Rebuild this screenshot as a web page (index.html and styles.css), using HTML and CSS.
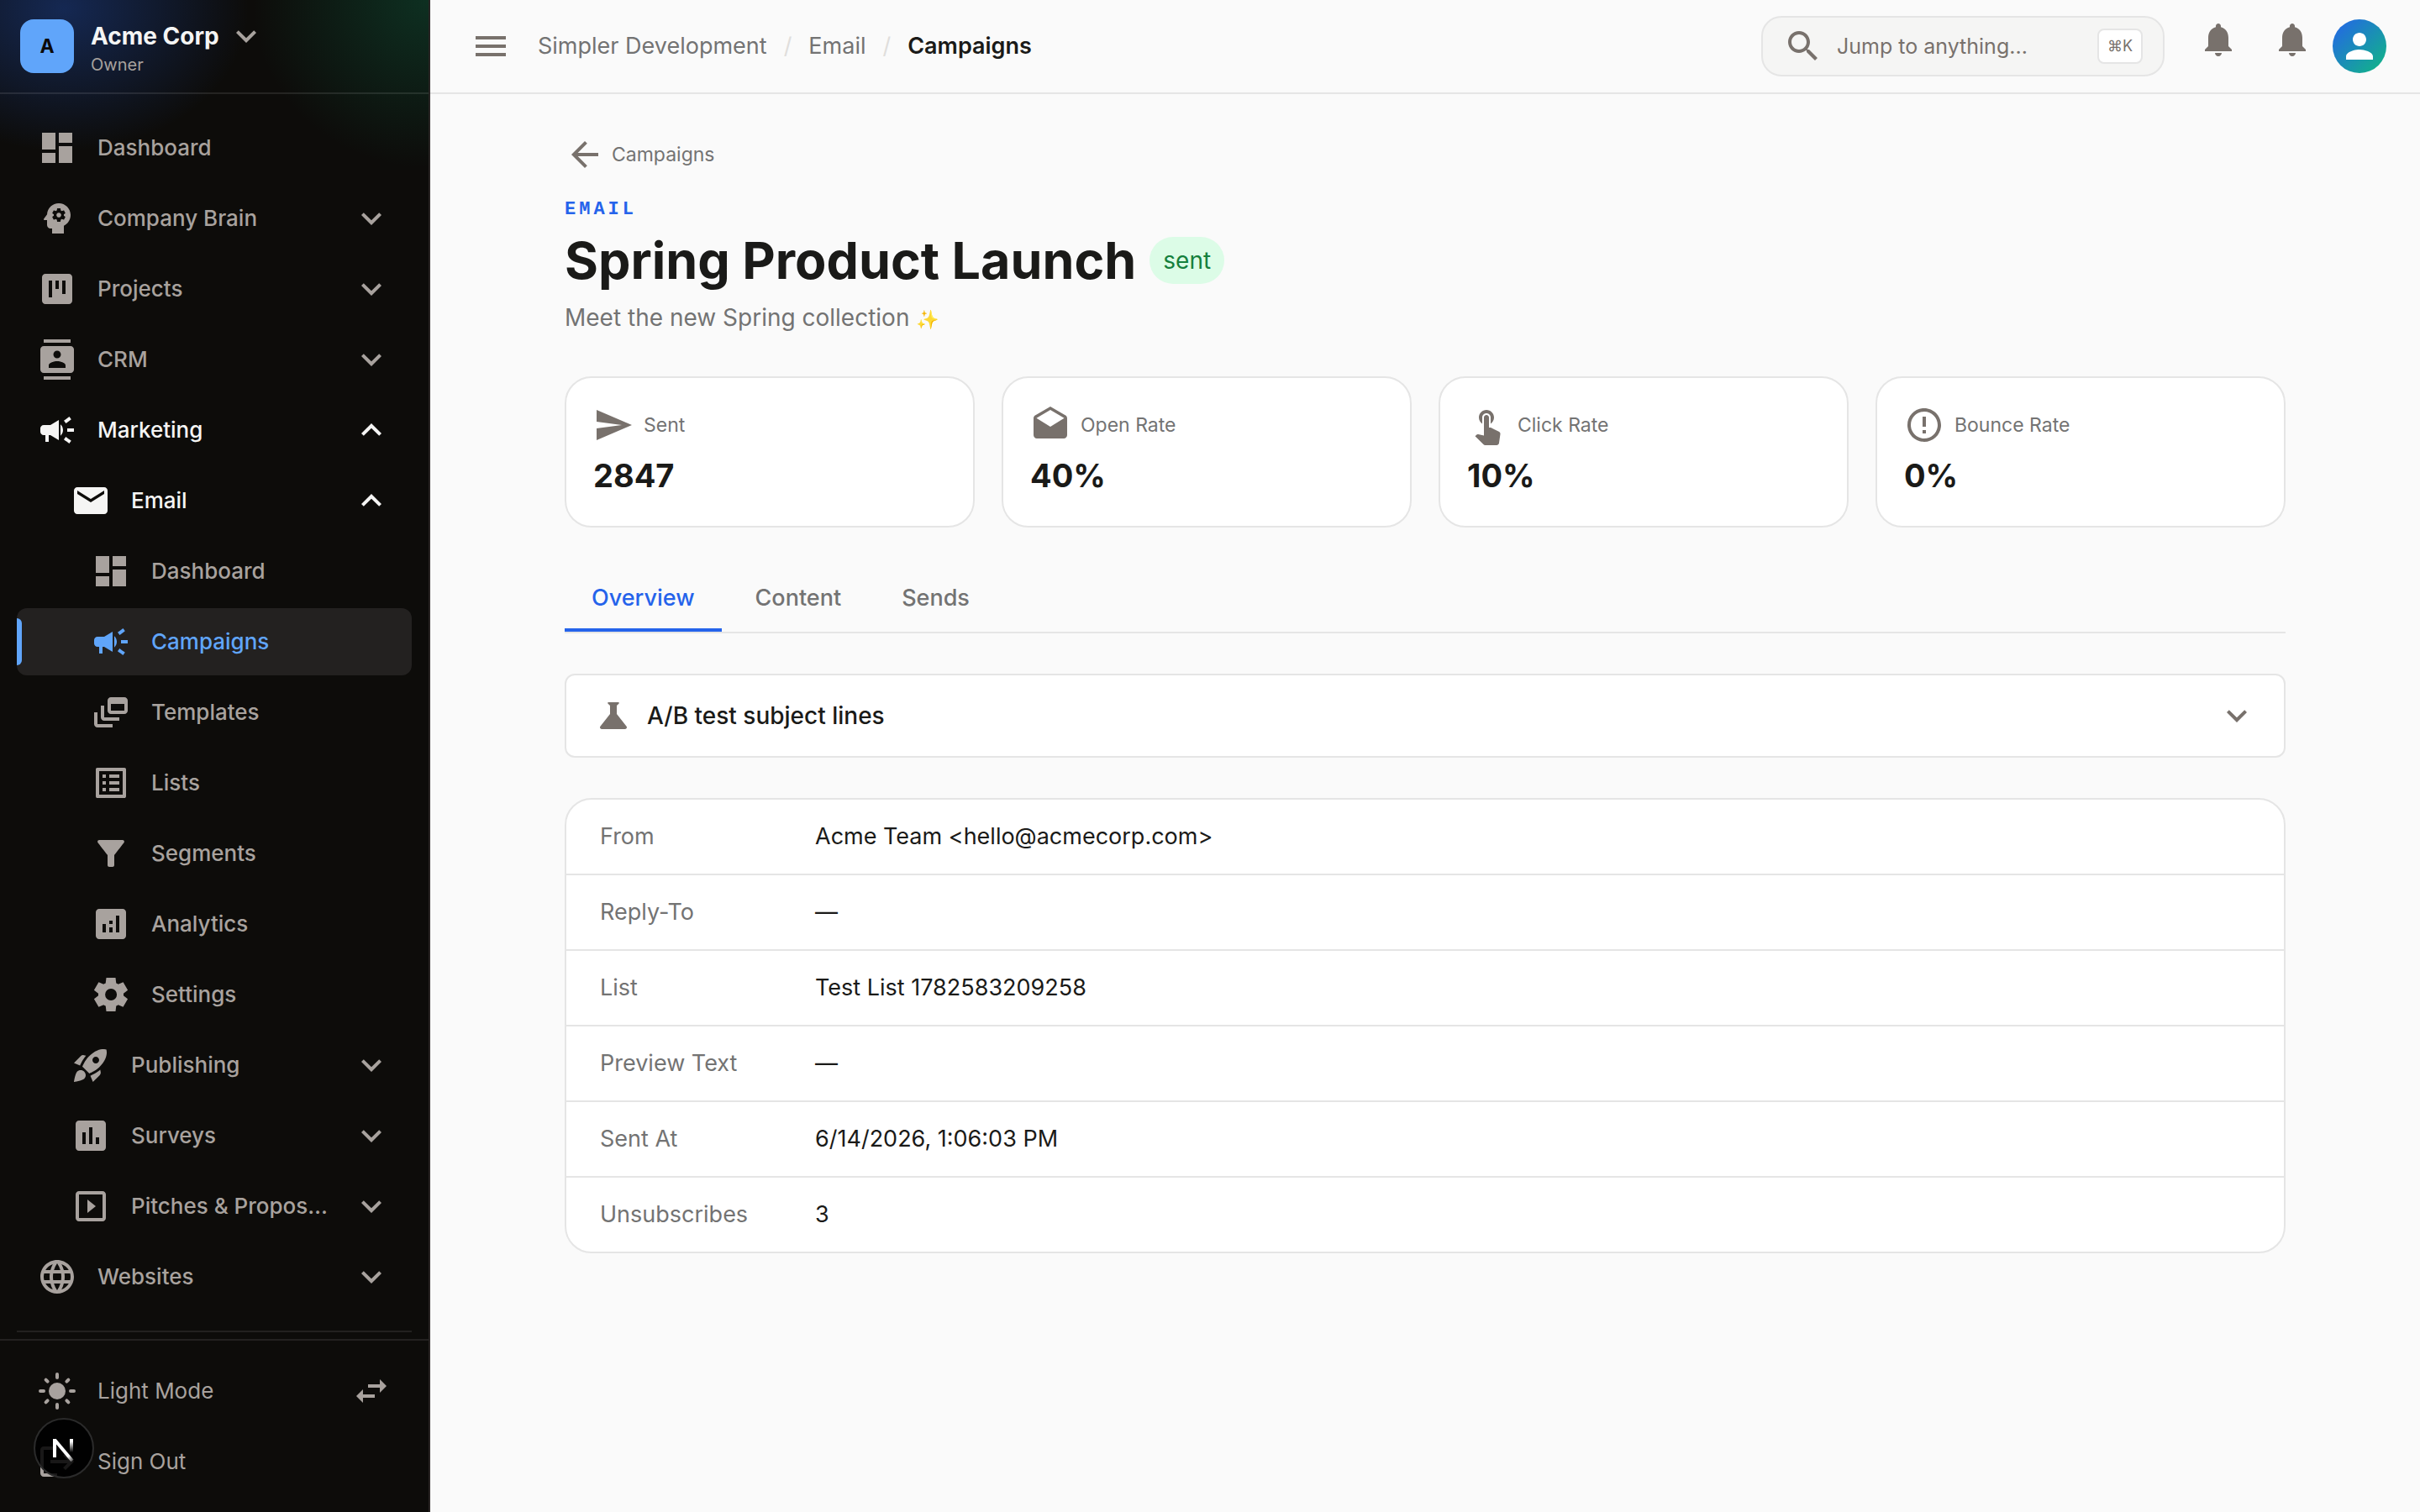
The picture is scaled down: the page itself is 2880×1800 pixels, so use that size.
FILE: index.html
```
<!DOCTYPE html>
<html lang="en">
<head>
  <meta charset="UTF-8">
  <meta name="viewport" content="width=device-width, initial-scale=1.0">
  <title>Spring Product Launch - Campaigns</title>
  <link rel="stylesheet" href="styles.css">
</head>
<body>
  <!-- icon set -->
  <svg class="sprite" aria-hidden="true">
    <symbol id="i-dashboard" viewBox="0 0 24 24"><path d="M3 13h8V3H3v10zm0 8h8v-6H3v6zm10 0h8V11h-8v10zm0-18v6h8V3h-8z"/></symbol>
    <symbol id="i-brain" viewBox="0 0 24 24"><path d="M13 8.57c-.79 0-1.43.64-1.43 1.43s.64 1.43 1.43 1.43 1.43-.64 1.43-1.43-.64-1.43-1.43-1.43z"/><path d="M13 3C9.25 3 6.2 5.94 6.02 9.64L4.1 12.2c-.25.33-.01.8.4.8H6v3c0 1.1.9 2 2 2h1v3h7v-4.68c2.36-1.12 4-3.53 4-6.32 0-3.87-3.13-7-7-7zm3 7c0 .13-.01.26-.02.39l.83.66c.08.06.1.16.05.25l-.8 1.39c-.05.09-.16.12-.24.09l-.99-.4c-.21.16-.43.29-.67.39L14 13.83c-.01.1-.1.17-.2.17h-1.6c-.1 0-.18-.07-.2-.17l-.15-1.06c-.25-.1-.47-.23-.68-.39l-.99.4c-.09.03-.2 0-.25-.09l-.8-1.39c-.05-.08-.03-.19.05-.25l.84-.66c-.01-.13-.02-.26-.02-.39s.02-.27.04-.39l-.85-.66c-.08-.06-.1-.16-.05-.26l.8-1.38c.05-.09.15-.12.24-.09l1 .4c.2-.15.43-.29.67-.39L12 6.17c.02-.1.1-.17.2-.17h1.6c.1 0 .18.07.2.17l.15 1.06c.24.1.46.23.67.39l1-.4c.09-.03.2 0 .24.09l.8 1.38c.05.09.03.2-.05.26l-.85.66c.03.12.04.25.04.39z"/></symbol>
    <symbol id="i-projects" viewBox="0 0 24 24"><path d="M19 3H5c-1.1 0-2 .9-2 2v14c0 1.1.9 2 2 2h14c1.1 0 2-.9 2-2V5c0-1.1-.9-2-2-2zM9 17H7V7h2v10zm4-5h-2V7h2v5zm4 3h-2V7h2v8z"/></symbol>
    <symbol id="i-contacts" viewBox="0 0 24 24"><path d="M20 0H4v2h16V0zM4 24h16v-2H4v2zM20 4H4c-1.1 0-2 .9-2 2v12c0 1.1.9 2 2 2h16c1.1 0 2-.9 2-2V6c0-1.1-.9-2-2-2zm-8 2.75c1.24 0 2.25 1.01 2.25 2.25s-1.01 2.25-2.25 2.25S9.75 10.24 9.75 9 10.76 6.75 12 6.75zM17 17H7v-1.5c0-1.67 3.33-2.5 5-2.5s5 .83 5 2.5V17z"/></symbol>
    <symbol id="i-campaign" viewBox="0 0 24 24"><path d="M18 11v2h4v-2h-4zm-2 6.61c.96.71 2.21 1.65 3.2 2.39.4-.53.8-1.07 1.2-1.6-.99-.74-2.24-1.68-3.2-2.4-.4.54-.8 1.08-1.2 1.61zM20.4 5.6c-.4-.53-.8-1.07-1.2-1.6-.99.74-2.24 1.68-3.2 2.4.4.53.8 1.07 1.2 1.6.96-.72 2.21-1.65 3.2-2.4zM4 9c-1.1 0-2 .9-2 2v2c0 1.1.9 2 2 2h1v4h2v-4h1l5 3V6L8 9H4zm11.5 3c0-1.33-.58-2.53-1.5-3.35v6.69c.92-.81 1.5-2.01 1.5-3.34z"/></symbol>
    <symbol id="i-mail" viewBox="0 0 24 24"><path d="M20 4H4c-1.1 0-1.99.9-1.99 2L2 18c0 1.1.9 2 2 2h16c1.1 0 2-.9 2-2V6c0-1.1-.9-2-2-2zm0 4l-8 5-8-5V6l8 5 8-5v2z"/></symbol>
    <symbol id="i-templates" viewBox="0 0 24 24"><path d="M8 8H6v7c0 1.1.9 2 2 2h9v-2H8V8zM20 3h-8c-1.1 0-2 .9-2 2v6c0 1.1.9 2 2 2h8c1.1 0 2-.9 2-2V5c0-1.1-.9-2-2-2zm0 8h-8V7h8v4zM4 12H2v7c0 1.1.9 2 2 2h9v-2H4v-7z"/></symbol>
    <symbol id="i-list" viewBox="0 0 24 24"><path d="M19 5v14H5V5h14m1.1-2H3.9c-.5 0-.9.4-.9.9v16.2c0 .4.4.9.9.9h16.2c.4 0 .9-.5.9-.9V3.9c0-.5-.5-.9-.9-.9zM11 7h6v2h-6V7zm0 4h6v2h-6v-2zm0 4h6v2h-6zM7 7h2v2H7zm0 4h2v2H7zm0 4h2v2H7z"/></symbol>
    <symbol id="i-filter" viewBox="0 0 24 24"><path d="M4.25 5.61C6.27 8.2 10 13 10 13v6c0 .55.45 1 1 1h2c.55 0 1-.45 1-1v-6s3.72-4.8 5.74-7.39c.51-.66.04-1.61-.79-1.61H5.04c-.83 0-1.3.95-.79 1.61z"/></symbol>
    <symbol id="i-analytics" viewBox="0 0 24 24"><path d="M19 3H5c-1.1 0-2 .9-2 2v14c0 1.1.9 2 2 2h14c1.1 0 2-.9 2-2V5c0-1.1-.9-2-2-2zM9 17H7v-5h2v5zm4 0h-2v-3h2v3zm0-5h-2v-2h2v2zm4 5h-2V7h2v10z"/></symbol>
    <symbol id="i-settings" viewBox="0 0 24 24"><path d="m9.25 22-.4-3.2q-.325-.125-.612-.3-.288-.175-.563-.375L4.7 19.375l-2.75-4.75 2.575-1.95Q4.5 12.5 4.5 12.337v-.675q0-.162.025-.337L1.95 9.375l2.75-4.75 2.975 1.25q.275-.2.575-.375.3-.175.6-.3l.4-3.2h5.5l.4 3.2q.325.125.613.3.287.175.562.375l2.975-1.25 2.75 4.75-2.575 1.95q.025.175.025.338v.674q0 .163-.05.338l2.575 1.95-2.75 4.75-2.95-1.25q-.275.2-.575.375-.3.175-.6.3l-.4 3.2Zm2.8-6.5q1.45 0 2.475-1.025Q15.55 13.45 15.55 12q0-1.45-1.025-2.475Q13.5 8.5 12.05 8.5q-1.475 0-2.488 1.025Q8.55 10.55 8.55 12q0 1.45 1.012 2.475Q10.575 15.5 12.05 15.5Z"/></symbol>
    <symbol id="i-rocket" viewBox="0 0 24 24"><path d="M9.19 6.35c-2.04 2.29-3.44 5.58-3.57 5.89L2 10.69l4.05-4.05c.47-.47 1.15-.68 1.81-.55l1.33.26zM11.17 17s3.74-1.55 5.89-3.7c5.4-5.4 4.5-9.62 4.21-10.57-.95-.3-5.17-1.19-10.57 4.21C8.55 9.09 7 12.83 7 12.83L11.17 17zm6.48-2.19c-2.29 2.04-5.58 3.44-5.89 3.57L13.31 22l4.05-4.05c.47-.47.68-1.15.55-1.81l-.26-1.33zM9 18c0 .83-.34 1.58-.88 2.12C6.94 21.3 2 22 2 22s.7-4.94 1.88-6.12C4.42 15.34 5.17 15 6 15c1.66 0 3 1.34 3 3zm4-9c0-1.1.9-2 2-2s2 .9 2 2-.9 2-2 2-2-.9-2-2z"/></symbol>
    <symbol id="i-poll" viewBox="0 0 24 24"><path d="M19 3H5c-1.1 0-2 .9-2 2v14c0 1.1.9 2 2 2h14c1.1 0 2-.9 2-2V5c0-1.1-.9-2-2-2zM9 17H7v-7h2v7zm4 0h-2V7h2v10zm4 0h-2v-4h2v4z"/></symbol>
    <symbol id="i-slideshow" viewBox="0 0 24 24"><path d="M10 8v8l5-4-5-4zm9-5H5c-1.1 0-2 .9-2 2v14c0 1.1.9 2 2 2h14c1.1 0 2-.9 2-2V5c0-1.1-.9-2-2-2zm0 16H5V5h14v14z"/></symbol>
    <symbol id="i-globe" viewBox="0 0 24 24"><path d="M11.99 2C6.47 2 2 6.48 2 12s4.47 10 9.99 10C17.52 22 22 17.52 22 12S17.52 2 11.99 2zm6.93 6h-2.95c-.32-1.25-.78-2.45-1.38-3.56 1.84.63 3.37 1.91 4.33 3.56zM12 4.04c.83 1.2 1.48 2.53 1.91 3.96h-3.82c.43-1.43 1.08-2.76 1.91-3.96zM4.26 14C4.1 13.36 4 12.69 4 12s.1-1.36.26-2h3.38c-.08.66-.14 1.32-.14 2 0 .68.06 1.34.14 2H4.26zm.82 2h2.95c.32 1.25.78 2.45 1.38 3.56-1.84-.63-3.37-1.9-4.33-3.56zm2.95-8H5.08c.96-1.66 2.49-2.93 4.33-3.56C8.81 5.55 8.35 6.75 8.03 8zM12 19.96c-.83-1.2-1.48-2.53-1.91-3.96h3.82c-.43 1.43-1.08 2.76-1.91 3.96zM14.34 14H9.66c-.09-.66-.16-1.32-.16-2 0-.68.07-1.35.16-2h4.68c.09.65.16 1.32.16 2 0 .68-.07 1.34-.16 2zm.25 5.56c.6-1.11 1.06-2.31 1.38-3.56h2.95c-.96 1.65-2.49 2.93-4.33 3.56zM16.36 14c.08-.66.14-1.32.14-2 0-.68-.06-1.34-.14-2h3.38c.16.64.26 1.31.26 2s-.1 1.36-.26 2h-3.38z"/></symbol>
    <symbol id="i-sun" viewBox="0 0 24 24"><circle cx="12" cy="12" r="5"/><path fill="none" stroke="currentColor" stroke-width="2" stroke-linecap="round" d="M12 2v2M12 20v2M2 12h2M20 12h2M5.3 5.3l1 1M17.7 17.7l1 1M18.7 5.3l-1 1M6.3 17.7l-1 1"/></symbol>
    <symbol id="i-swap" viewBox="0 0 24 24"><path d="M6.99 11L3 15l3.99 4v-3H14v-2H6.99v-3zM21 9l-3.99-4v3H10v2h7.01v3L21 9z"/></symbol>
    <symbol id="i-logout" viewBox="0 0 24 24"><path d="M17 7l-1.41 1.41L18.17 11H8v2h10.17l-2.58 2.58L17 17l5-5zM4 5h8V3H4c-1.1 0-2 .9-2 2v14c0 1.1.9 2 2 2h8v-2H4V5z"/></symbol>
    <symbol id="i-down" viewBox="0 0 24 24"><path d="M16.59 8.59L12 13.17 7.41 8.59 6 10l6 6 6-6z"/></symbol>
    <symbol id="i-up" viewBox="0 0 24 24"><path d="M12 8l-6 6 1.41 1.41L12 10.83l4.59 4.58L18 14z"/></symbol>
    <symbol id="i-menu" viewBox="0 0 24 24"><path d="M3 18h18v-2H3v2zm0-5h18v-2H3v2zm0-7v2h18V6H3z"/></symbol>
    <symbol id="i-search" viewBox="0 0 24 24"><path d="M15.5 14h-.79l-.28-.27C15.41 12.59 16 11.11 16 9.5 16 5.91 13.09 3 9.5 3S3 5.91 3 9.5 5.91 16 9.5 16c1.61 0 3.09-.59 4.23-1.57l.27.28v.79l5 4.99L20.49 19l-4.99-5zm-6 0C7.01 14 5 11.99 5 9.5S7.01 5 9.5 5 14 7.01 14 9.5 11.99 14 9.5 14z"/></symbol>
    <symbol id="i-bell" viewBox="0 0 24 24"><path d="M12 22c1.1 0 2-.9 2-2h-4c0 1.1.89 2 2 2zm6-6v-5c0-3.07-1.64-5.64-4.5-6.32V4c0-.83-.67-1.5-1.5-1.5s-1.5.67-1.5 1.5v.68C7.63 5.36 6 7.92 6 11v5l-2 2v1h16v-1l-2-2z"/></symbol>
    <symbol id="i-person" viewBox="0 0 24 24"><path d="M12 12c2.21 0 4-1.79 4-4s-1.79-4-4-4-4 1.79-4 4 1.79 4 4 4zm0 2c-2.67 0-8 1.34-8 4v2h16v-2c0-2.66-5.33-4-8-4z"/></symbol>
    <symbol id="i-back" viewBox="0 0 24 24"><path d="M20 11H7.83l5.59-5.59L12 4l-8 8 8 8 1.41-1.41L7.83 13H20v-2z"/></symbol>
    <symbol id="i-send" viewBox="0 0 24 24"><path d="M2.01 21L23 12 2.01 3 2 10l15 2-15 2z"/></symbol>
    <symbol id="i-drafts" viewBox="0 0 24 24"><path d="M21.99 8c0-.72-.37-1.35-.94-1.7L12 1 2.95 6.3C2.38 6.65 2 7.28 2 8v10c0 1.1.9 2 2 2h16c1.1 0 2-.9 2-2l-.01-10zM12 13L3.74 7.84 12 3l8.26 4.84L12 13z"/></symbol>
    <symbol id="i-touch" viewBox="0 0 24 24"><path d="M9 11.24V7.5C9 6.12 10.12 5 11.5 5S14 6.12 14 7.5v3.74c1.21-.81 2-2.18 2-3.74C16 5.01 13.99 3 11.5 3S7 5.01 7 7.5c0 1.56.79 2.93 2 3.74zm9.84 4.63l-4.54-2.26c-.17-.07-.35-.11-.54-.11H13v-6c0-.83-.67-1.5-1.5-1.5S10 6.67 10 7.5v10.74l-3.43-.72c-.08-.01-.15-.03-.24-.03-.31 0-.59.13-.79.33l-.79.8 4.94 4.94c.27.27.65.44 1.06.44h6.79c.75 0 1.33-.55 1.44-1.28l.75-5.27c.01-.07.02-.14.02-.2 0-.62-.38-1.16-.91-1.38z"/></symbol>
    <symbol id="i-error" viewBox="0 0 24 24"><path d="M11 15h2v2h-2zm0-8h2v6h-2zm.99-5C6.47 2 2 6.48 2 12s4.47 10 9.99 10C17.52 22 22 17.52 22 12S17.52 2 11.99 2zM12 20c-4.42 0-8-3.58-8-8s3.58-8 8-8 8 3.58 8 8-3.58 8-8 8z"/></symbol>
    <symbol id="i-flask" viewBox="0 0 24 24"><path d="M9 4h6c.4 0 .5.5.3.7L14 6v5l5.8 7.4c.5.6.1 1.6-.8 1.6H5c-.9 0-1.3-1-.8-1.6L10 11V6L8.7 4.7C8.5 4.5 8.6 4 9 4z"/></symbol>
  </svg>

  <div class="app">
    <aside class="sidebar">
      <div class="workspace">
        <span class="workspace-logo">A</span>
        <div class="workspace-info">
          <button type="button" class="workspace-name">Acme Corp <svg class="icon"><use href="#i-down"/></svg></button>
          <span class="workspace-role">Owner</span>
        </div>
      </div>

      <nav class="nav">
        <a href="#" class="nav-item"><svg class="icon"><use href="#i-dashboard"/></svg><span class="nav-label">Dashboard</span></a>
        <button type="button" class="nav-item"><svg class="icon"><use href="#i-brain"/></svg><span class="nav-label">Company Brain</span><svg class="icon"><use href="#i-down"/></svg></button>
        <button type="button" class="nav-item"><svg class="icon"><use href="#i-projects"/></svg><span class="nav-label">Projects</span><svg class="icon"><use href="#i-down"/></svg></button>
        <button type="button" class="nav-item"><svg class="icon"><use href="#i-contacts"/></svg><span class="nav-label">CRM</span><svg class="icon"><use href="#i-down"/></svg></button>
        <button type="button" class="nav-item open"><svg class="icon"><use href="#i-campaign"/></svg><span class="nav-label">Marketing</span><svg class="icon"><use href="#i-up"/></svg></button>
        <button type="button" class="nav-item level-2 open"><svg class="icon"><use href="#i-mail"/></svg><span class="nav-label">Email</span><svg class="icon"><use href="#i-up"/></svg></button>
        <a href="#" class="nav-item level-3"><svg class="icon"><use href="#i-dashboard"/></svg><span class="nav-label">Dashboard</span></a>
        <a href="#" class="nav-item level-3 active"><svg class="icon"><use href="#i-campaign"/></svg><span class="nav-label">Campaigns</span></a>
        <a href="#" class="nav-item level-3"><svg class="icon"><use href="#i-templates"/></svg><span class="nav-label">Templates</span></a>
        <a href="#" class="nav-item level-3"><svg class="icon"><use href="#i-list"/></svg><span class="nav-label">Lists</span></a>
        <a href="#" class="nav-item level-3"><svg class="icon"><use href="#i-filter"/></svg><span class="nav-label">Segments</span></a>
        <a href="#" class="nav-item level-3"><svg class="icon"><use href="#i-analytics"/></svg><span class="nav-label">Analytics</span></a>
        <a href="#" class="nav-item level-3"><svg class="icon"><use href="#i-settings"/></svg><span class="nav-label">Settings</span></a>
        <button type="button" class="nav-item level-2"><svg class="icon"><use href="#i-rocket"/></svg><span class="nav-label">Publishing</span><svg class="icon"><use href="#i-down"/></svg></button>
        <button type="button" class="nav-item level-2"><svg class="icon"><use href="#i-poll"/></svg><span class="nav-label">Surveys</span><svg class="icon"><use href="#i-down"/></svg></button>
        <button type="button" class="nav-item level-2"><svg class="icon"><use href="#i-slideshow"/></svg><span class="nav-label">Pitches &amp; Propos…</span><svg class="icon"><use href="#i-down"/></svg></button>
        <button type="button" class="nav-item"><svg class="icon"><use href="#i-globe"/></svg><span class="nav-label">Websites</span><svg class="icon"><use href="#i-down"/></svg></button>
        <hr class="nav-divider">
      </nav>

      <div class="sidebar-footer">
        <button type="button" class="nav-item plain"><svg class="icon"><use href="#i-sun"/></svg><span class="nav-label">Light Mode</span><svg class="icon"><use href="#i-swap"/></svg></button>
        <button type="button" class="nav-item plain"><svg class="icon"><use href="#i-logout"/></svg><span class="nav-label">Sign Out</span></button>
      </div>
    </aside>

    <div class="page">
      <header class="topbar">
        <button type="button" class="icon-btn" aria-label="Toggle menu"><svg class="icon"><use href="#i-menu"/></svg></button>
        <nav class="breadcrumb">
          <a href="#">Simpler Development</a>
          <span class="sep">/</span>
          <a href="#">Email</a>
          <span class="sep">/</span>
          <span class="current">Campaigns</span>
        </nav>
        <label class="search">
          <svg class="icon"><use href="#i-search"/></svg>
          <input type="text" placeholder="Jump to anything..." aria-label="Jump to anything">
          <kbd>⌘K</kbd>
        </label>
        <button type="button" class="icon-btn bell" aria-label="Notifications"><svg class="icon"><use href="#i-bell"/></svg></button>
        <button type="button" class="icon-btn bell" aria-label="Alerts"><svg class="icon"><use href="#i-bell"/></svg></button>
        <button type="button" class="avatar" aria-label="Account"><svg class="icon"><use href="#i-person"/></svg></button>
      </header>

      <main class="content">
        <a href="#" class="back"><svg class="icon"><use href="#i-back"/></svg>Campaigns</a>
        <p class="eyebrow">Email</p>
        <h1 class="title">Spring Product Launch <span class="badge">sent</span></h1>
        <p class="subtitle">Meet the new Spring collection <span class="emoji">✨</span></p>

        <section class="stats">
          <div class="stat">
            <div class="stat-label"><svg class="icon"><use href="#i-send"/></svg>Sent</div>
            <div class="stat-value">2847</div>
          </div>
          <div class="stat">
            <div class="stat-label"><svg class="icon"><use href="#i-drafts"/></svg>Open Rate</div>
            <div class="stat-value">40%</div>
          </div>
          <div class="stat">
            <div class="stat-label"><svg class="icon"><use href="#i-touch"/></svg>Click Rate</div>
            <div class="stat-value">10%</div>
          </div>
          <div class="stat">
            <div class="stat-label"><svg class="icon"><use href="#i-error"/></svg>Bounce Rate</div>
            <div class="stat-value">0%</div>
          </div>
        </section>

        <div class="tabs" role="tablist">
          <button type="button" role="tab" class="tab selected" aria-selected="true">Overview</button>
          <button type="button" role="tab" class="tab">Content</button>
          <button type="button" role="tab" class="tab">Sends</button>
        </div>

        <button type="button" class="accordion">
          <svg class="icon"><use href="#i-flask"/></svg>
          <span class="accordion-title">A/B test subject lines</span>
          <svg class="icon"><use href="#i-down"/></svg>
        </button>

        <div class="details">
          <table>
            <tr><th scope="row">From</th><td>Acme Team &lt;hello@acmecorp.com&gt;</td></tr>
            <tr><th scope="row">Reply-To</th><td>—</td></tr>
            <tr><th scope="row">List</th><td>Test List 1782583209258</td></tr>
            <tr><th scope="row">Preview Text</th><td>—</td></tr>
            <tr><th scope="row">Sent At</th><td>6/14/2026, 1:06:03 PM</td></tr>
            <tr><th scope="row">Unsubscribes</th><td>3</td></tr>
          </table>
        </div>
      </main>
    </div>
  </div>

  <!-- dev tools badge -->
  <button type="button" class="dev-badge" aria-label="Open dev tools">
    <svg class="icon" viewBox="0 0 40 40">
      <defs>
        <linearGradient id="fade-diag" gradientUnits="userSpaceOnUse" x1="20" y1="20" x2="33" y2="37"><stop offset="0.5" stop-color="#fff"/><stop offset="1" stop-color="#fff" stop-opacity="0"/></linearGradient>
        <linearGradient id="fade-bar" gradientUnits="userSpaceOnUse" x1="28" y1="12" x2="28" y2="25"><stop offset="0" stop-color="#fff"/><stop offset="1" stop-color="#fff" stop-opacity="0"/></linearGradient>
      </defs>
      <rect x="7" y="9" width="4" height="22" fill="#fff"/>
      <line x1="9" y1="10" x2="30" y2="35" stroke="url(#fade-diag)" stroke-width="4"/>
      <rect x="27" y="9" width="4" height="16" fill="url(#fade-bar)"/>
    </svg>
  </button>
</body>
</html>
```
FILE: styles.css
```
* { box-sizing: border-box; }
body { margin: 0; font-family: Inter, "Liberation Sans", sans-serif; font-size: 27px; line-height: 40px; color: #1a1a18; background: #fafafa; }
a { color: inherit; text-decoration: none; }
button { font: inherit; color: inherit; background: none; border: none; padding: 0; text-align: left; cursor: pointer; }
h1, p { margin: 0; }

.sprite { display: none; }
.icon { width: 48px; height: 48px; flex: none; fill: currentColor; }

.app { display: flex; height: 100vh; }

/* Sidebar */
.sidebar {
  width: 512px;
  flex: none;
  display: flex;
  flex-direction: column;
  color: #a8a29e;
  border-right: 2px solid #292524;
  background:
    radial-gradient(ellipse 220px 170px at 76px 10px, rgba(37, 99, 235, 0.32), transparent),
    radial-gradient(ellipse 210px 200px at 510px 0, rgba(16, 150, 100, 0.26), transparent),
    #0d0c0a;
}
.workspace { display: flex; align-items: center; gap: 20px; height: 112px; padding: 0 24px; border-bottom: 2px solid rgba(255, 255, 255, 0.1); flex: none; }
.workspace-logo { width: 64px; height: 64px; border-radius: 16px; background: #60a5fa; color: #0c0a09; font-size: 23px; font-weight: 700; line-height: 64px; text-align: center; }
.workspace-info { display: flex; flex-direction: column; padding-top: 4px; }
.workspace-name { display: flex; align-items: center; gap: 8px; height: 40px; font-size: 28px; font-weight: 700; color: #f5f5f4; }
.workspace-name .icon { color: #a8a29e; }
.workspace-role { font-size: 20px; line-height: 28px; }

.nav { flex: 1; min-height: 0; overflow: hidden; display: flex; flex-direction: column; gap: 4px; padding: 24px 20px 0; }
.nav-item { position: relative; display: flex; align-items: center; gap: 24px; width: 100%; height: 80px; flex: none; padding: 0 24px; border-radius: 12px; font-size: 26px; font-weight: 500; }
.nav-item.level-2 { padding-left: 64px; }
.nav-item.level-3 { padding-left: 88px; }
.nav-item.open { color: #f5f5f4; }
.nav-item.plain { font-weight: 400; }
.nav-item.active { color: #60a5fa; background: #232120; }
.nav-item.active::before { content: ""; position: absolute; left: 0; top: 12px; bottom: 12px; width: 6px; border-radius: 0 6px 6px 0; background: #60a5fa; }
.nav-label { flex: 1; min-width: 0; white-space: nowrap; }
.nav-divider { width: 100%; margin: 20px 0 0; border: none; border-top: 2px solid #232120; }

.sidebar-footer { display: flex; flex-direction: column; gap: 4px; padding: 20px; border-top: 2px solid #232120; }

/* Top bar */
.page { flex: 1; min-width: 0; overflow: auto; }
.topbar { display: flex; align-items: center; gap: 8px; height: 112px; padding: 0 40px 0 48px; border-bottom: 2px solid #e5e5e5; color: #78716c; }
.icon-btn { display: flex; }
.breadcrumb { flex: 1; display: flex; gap: 20px; padding-left: 24px; color: #737373; }
.breadcrumb .sep { color: #e0dedc; }
.breadcrumb .current { color: #1a1a18; font-weight: 600; }
.search { display: flex; align-items: center; gap: 16px; width: 480px; height: 72px; margin-right: 16px; padding: 0 24px; border: 2px solid #e5e5e5; border-radius: 24px; background: #f5f5f4; }
.search input { flex: 1; min-width: 0; padding: 0; border: none; outline: none; background: none; font: inherit; font-size: 25px; }
.search input::placeholder { color: #78716c; opacity: 1; }
.search kbd { height: 42px; padding: 0 10px; border: 2px solid #e5e5e5; border-radius: 8px; background: #fff; font-family: inherit; font-size: 18px; line-height: 38px; }
.bell { padding: 0 16px 16px; }
.avatar { display: flex; align-items: center; justify-content: center; width: 64px; height: 64px; border-radius: 50%; color: #fff; background: linear-gradient(135deg, #2563eb, #10b981); }

/* Content */
.content { max-width: 2144px; margin: 0 auto; padding: 48px; }
.back { display: flex; align-items: center; gap: 8px; margin-bottom: 24px; font-size: 23px; color: #737373; }
.back .icon { color: #78716c; }
.eyebrow { margin-bottom: 4px; font-family: "Liberation Mono", monospace; font-size: 22px; font-weight: 700; line-height: 36px; letter-spacing: 4px; text-transform: uppercase; color: #2563eb; }
.title { display: flex; align-items: center; gap: 16px; font-size: 61px; font-weight: 700; line-height: 76px; }
.badge { padding: 8px 16px; border-radius: 28px; background: #dcfce7; color: #15803d; font-size: 28px; font-weight: 400; line-height: 40px; }
.subtitle { margin-top: 8px; font-size: 28px; line-height: 44px; color: #737373; }
.emoji { font-size: 22px; line-height: 22px; }

.stats { display: grid; grid-template-columns: repeat(4, 1fr); gap: 32px; margin-top: 48px; }
.stat { padding: 32px; border: 2px solid #e5e5e5; border-radius: 32px; background: #fff; }
.stat-label { display: flex; align-items: center; gap: 12px; margin-bottom: 8px; font-size: 23px; color: #737373; }
.stat-label .icon { color: #78716c; }
.stat-value { font-size: 38px; font-weight: 700; line-height: 56px; }

.tabs { display: flex; gap: 8px; margin-top: 48px; border-bottom: 2px solid #e5e5e5; }
.tab { padding: 16px 32px; border-bottom: 4px solid transparent; font-weight: 500; color: #737373; }
.tab.selected { color: #2563eb; border-bottom-color: #2563eb; }

.accordion { display: flex; align-items: center; gap: 16px; width: 100%; height: 100px; margin-top: 48px; padding: 0 32px; border: 2px solid #e5e5e5; border-radius: 12px; background: #fff; }
.accordion .icon { color: #78716c; }
.accordion-title { flex: 1; font-size: 28px; font-weight: 500; }

.details { margin-top: 48px; border: 2px solid #e5e5e5; border-radius: 32px; background: #fff; overflow: hidden; }
.details table { width: 100%; border-spacing: 0; }
.details th, .details td { padding: 24px 0; text-align: left; border-bottom: 2px solid #e5e5e5; }
.details th { width: 296px; padding-left: 40px; font-weight: 400; color: #737373; }
.details tr:last-child th, .details tr:last-child td { border-bottom: none; }

.dev-badge { position: fixed; left: 40px; bottom: 40px; display: flex; align-items: center; justify-content: center; width: 72px; height: 72px; border: 2px solid #2b2b2b; border-radius: 50%; background: rgba(0, 0, 0, 0.85); }
.dev-badge .icon { width: 40px; height: 40px; }
```
